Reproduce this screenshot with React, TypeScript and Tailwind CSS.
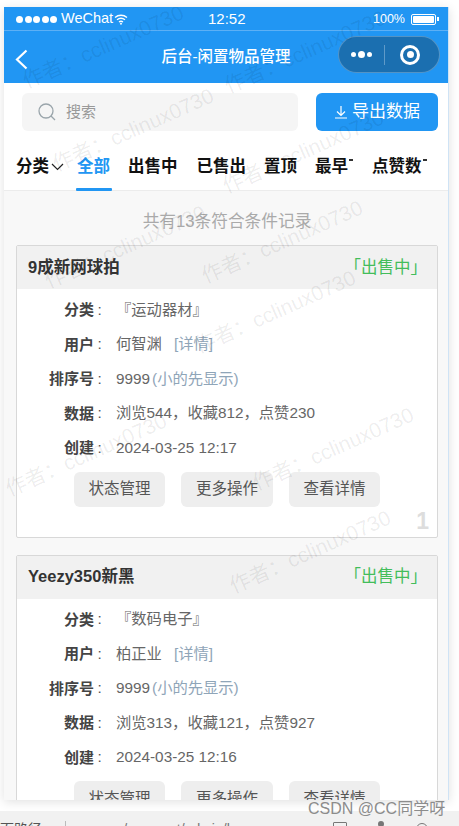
import React from "react";

const FONT = "font-['Liberation_Sans','Noto_Sans_CJK_SC',sans-serif]";

function Row({ label, children }: { label: string; children: React.ReactNode }) {
  return (
    <div className="flex h-[34.5px] items-center text-[15.3px]">
      <div className="w-[77px] text-right text-[15px] font-bold text-[#444]">{label}</div>
      <div className="w-[7px] ml-[2px] text-center text-[#555]">:</div>
      <div className="ml-[13px] flex items-center text-[#666]">{children}</div>
    </div>
  );
}

function Card({ title, cat, user, data, time, num }: { title: string; cat: string; user: string; data: string; time: string; num?: string }) {
  return (
    <div className="relative mb-[17px] rounded-[2px] border border-[#d8d8d8] bg-white">
      <div className="flex h-[43px] items-center justify-between bg-[#f1f1f1] pb-[1px] pl-[11px] pr-[10px]">
        <span className="text-[16.5px] font-bold text-[#333]">{title}</span>
        <span className="text-[16.5px] text-[#43bd5b]">「出售中」</span>
      </div>
      <div className="pt-[4px]">
        <Row label="分类"><span>『{cat}』</span></Row>
        <Row label="用户">
          <span>{user}</span>
          <span className="ml-[12px] text-[#8fa5b8]">[详情]</span>
        </Row>
        <Row label="排序号">
          <span>9999</span>
          <span className="ml-[2px] text-[#8fa5b8]">(小的先显示)</span>
        </Row>
        <Row label="数据"><span>{data}</span></Row>
        <Row label="创建"><span>{time}</span></Row>
      </div>
      <div className="mt-[6px] flex gap-[16px] pl-[57px] text-[15.5px] text-[#555]">
        <div className="flex h-[35px] w-[91px] items-center justify-center rounded-[6px] bg-[#eeeeee]">状态管理</div>
        <div className="flex h-[35px] w-[92px] items-center justify-center rounded-[6px] bg-[#eeeeee]">更多操作</div>
        <div className="flex h-[35px] w-[91px] items-center justify-center rounded-[6px] bg-[#eeeeee]">查看详情</div>
      </div>
      <div className="h-[30px]" />
      {num && <span className="absolute bottom-[-2px] right-[8px] text-[23px] font-bold text-[#dddddd]">{num}</span>}
    </div>
  );
}

const WM = "absolute w-[176px] whitespace-nowrap text-center text-[21px] text-black/[0.08] rotate-[-24deg] pointer-events-none font-['Liberation_Sans','Noto_Sans_CJK_SC',sans-serif]";

export default function App() {
  return (
    <div className={`relative h-[826px] w-[459px] overflow-hidden bg-white ${FONT}`}>
      <div className="pt-[7px] pl-[4px]">
        <div className="relative h-[793px] w-[445px] overflow-hidden border-r border-[#cfe3f5] bg-[#f8f8f8] shadow-[0_2px_10px_rgba(0,0,0,0.12)]">
          {/* status bar */}
          <div className="relative flex h-[24px] items-center border-b border-[#5db0f5] bg-[#2196f3] pt-[1px] text-white">
            <div className="ml-[12px] flex gap-[1.5px]">
              <i className="h-[7px] w-[7px] rounded-full bg-white" />
              <i className="h-[7px] w-[7px] rounded-full bg-white" />
              <i className="h-[7px] w-[7px] rounded-full bg-white" />
              <i className="h-[7px] w-[7px] rounded-full bg-white" />
              <i className="h-[7px] w-[7px] rounded-full bg-white" />
            </div>
            <span className="ml-[4px] text-[14.5px]">WeChat</span>
            <svg className="ml-[1px]" width="14" height="11" viewBox="0 0 14 11" fill="none" stroke="white" strokeWidth="1.4">
              <path d="M1 3.5C4.5 .5 9.5 .5 13 3.5" />
              <path d="M3 5.8C5.3 4 8.7 4 11 5.8" />
              <path d="M5 8C6.2 7.1 7.8 7.1 9 8" />
              <path d="M6.3 9.3L7 10l.7-.7" />
            </svg>
            <span className="absolute left-[204px] text-[15px]">12:52</span>
            <span className="absolute left-[369px] text-[12.5px]">100%</span>
            <div className="absolute left-[407px] h-[11px] w-[25px] rounded-[2px] border border-white p-[1px]">
              <div className="h-full w-full rounded-[1px] bg-white" />
            </div>
            <i className="absolute left-[433px] h-[4px] w-[1.5px] bg-white" />
          </div>
          {/* nav bar */}
          <div className="relative flex h-[52px] items-center justify-center bg-[#2196f3] text-white">
            <svg className="absolute left-[11px] top-[18px]" width="13" height="21" viewBox="0 0 13 21" fill="none" stroke="white" strokeWidth="2.2">
              <path d="M11.5 1.5L2 10.5l9.5 9" />
            </svg>
            <span className="text-[15.5px] font-medium">后台-闲置物品管理</span>
            <div className="absolute left-[334px] top-[5px] flex h-[37px] w-[102px] items-center rounded-full border border-white/25 bg-[#1b6fb0]">
              <div className="ml-[12px] flex items-center gap-[2px]">
                <i className="h-[5px] w-[5px] rounded-full bg-white" />
                <i className="h-[7px] w-[7px] rounded-full bg-white" />
                <i className="h-[5px] w-[5px] rounded-full bg-white" />
              </div>
              <i className="ml-[12px] h-[20px] w-px bg-white/30" />
              <div className="ml-[15px] flex h-[20px] w-[20px] items-center justify-center rounded-full border-[3px] border-white">
                <i className="h-[7px] w-[7px] rounded-full bg-white" />
              </div>
            </div>
          </div>
          {/* search */}
          <div className="flex items-center justify-between bg-white pl-[18px] pr-[10px] pt-[10px]">
            <div className="flex h-[38px] w-[276px] items-center rounded-[6px] bg-[#f5f5f5] pl-[16px]">
              <svg width="18" height="18" viewBox="0 0 18 18" fill="none" stroke="#9aa5ab" strokeWidth="1.3">
                <circle cx="8" cy="8" r="7" />
                <path d="M13 13l4 4" />
              </svg>
              <span className="ml-[10px] text-[15px] text-[#999]">搜索</span>
            </div>
            <div className="flex h-[38px] w-[122px] items-center justify-center rounded-[6px] bg-[#2196f3] text-[17px] text-white">
              <svg width="14" height="14" viewBox="0 0 14 14" fill="none" stroke="white" strokeWidth="1.2">
                <path d="M7 1v9M3 6.5L7 10.5l4-4M1 13h12" />
              </svg>
              <span className="ml-[4px]">导出数据</span>
            </div>
          </div>
          {/* tabs */}
          <div className="flex h-[60px] items-center border-b border-[#ececec] bg-white pl-[12px] pt-[12px] text-[16.5px] font-bold text-[#111]">
            <span>分类</span>
            <svg className="ml-[2px]" width="13" height="8" viewBox="0 0 13 8" fill="none" stroke="#222" strokeWidth="1.2">
              <path d="M1 1l5.5 5.5L12 1" />
            </svg>
            <span className="relative ml-[13px] text-[#2196f3]">
              全部
              <i className="absolute left-[-1px] top-[34px] h-[3px] w-[36px] rounded-[1px] bg-[#2196f3]" />
            </span>
            <span className="ml-[18px]">出售中</span>
            <span className="ml-[19px]">已售出</span>
            <span className="ml-[18px]">置顶</span>
            <span className="relative ml-[18px]">
              最早<i className="absolute right-[-5px] top-[5px] h-[1.5px] w-[4px] bg-[#333]" />
            </span>
            <span className="relative ml-[24px]">
              点赞数<i className="absolute right-[-5px] top-[5px] h-[1.5px] w-[4px] bg-[#333]" />
            </span>
          </div>
          {/* list */}
          <div className="pl-[12px] pr-[10px] pt-[18px]">
            <div className="mb-[11px] text-center text-[16.7px] text-[#aaaaaa]">共有13条符合条件记录</div>
            <Card title="9成新网球拍" cat="运动器材" user="何智渊" data="浏览544，收藏812，点赞230" time="2024-03-25 12:17" num="1" />
            <Card title="Yeezy350新黑" cat="数码电子" user="柏正业" data="浏览313，收藏121，点赞927" time="2024-03-25 12:16" />
          </div>
          {/* watermarks */}
          <span className={`${WM} left-[11px] top-[24px]`}>作者：cclinux0730</span>
          <span className={`${WM} left-[213px] top-[29px]`}>作者：cclinux0730</span>
          <span className={`${WM} left-[41px] top-[107px]`}>作者：cclinux0730</span>
          <span className={`${WM} left-[211px] top-[129px]`}>作者：cclinux0730</span>
          <span className={`${WM} left-[33px] top-[224px]`}>作者：cclinux0730</span>
          <span className={`${WM} left-[190px] top-[219px]`}>作者：cclinux0730</span>
          <span className={`${WM} left-[183px] top-[289px]`}>作者：cclinux0730</span>
          <span className={`${WM} left-[-6px] top-[432px]`}>作者：cclinux0730</span>
          <span className={`${WM} left-[241px] top-[426px]`}>作者：cclinux0730</span>
          <span className={`${WM} left-[218px] top-[529px]`}>作者：cclinux0730</span>
        </div>
      </div>
      {/* browser strip at the bottom */}
      <div className="absolute bottom-0 left-0 flex h-[15px] w-full items-start overflow-hidden bg-[#f1f1f1] pt-[10px] text-[14px] leading-[16px] text-[#555]">
        <span className="ml-[-14px]">页面路径</span>
        <i className="ml-[23px] h-[6px] w-px bg-[#bbb]" />
        <span className="ml-[19px] text-[#777]">pages/passport/admin/home</span>
        <i className="absolute left-[333px] top-[11px] h-[6px] w-[14px] rounded-[1px] border border-[#777]" />
        <i className="absolute left-[378px] top-[10px] h-[6px] w-[6px] rounded-full bg-[#777]" />
        <i className="absolute left-[416px] top-[12px] h-[12px] w-[12px] rounded-full border border-[#777]" />
      </div>
      <span className="absolute left-[308px] top-[797px] text-[16px] text-[#8c8c8c]">CSDN @CC同学呀</span>
    </div>
  );
}
